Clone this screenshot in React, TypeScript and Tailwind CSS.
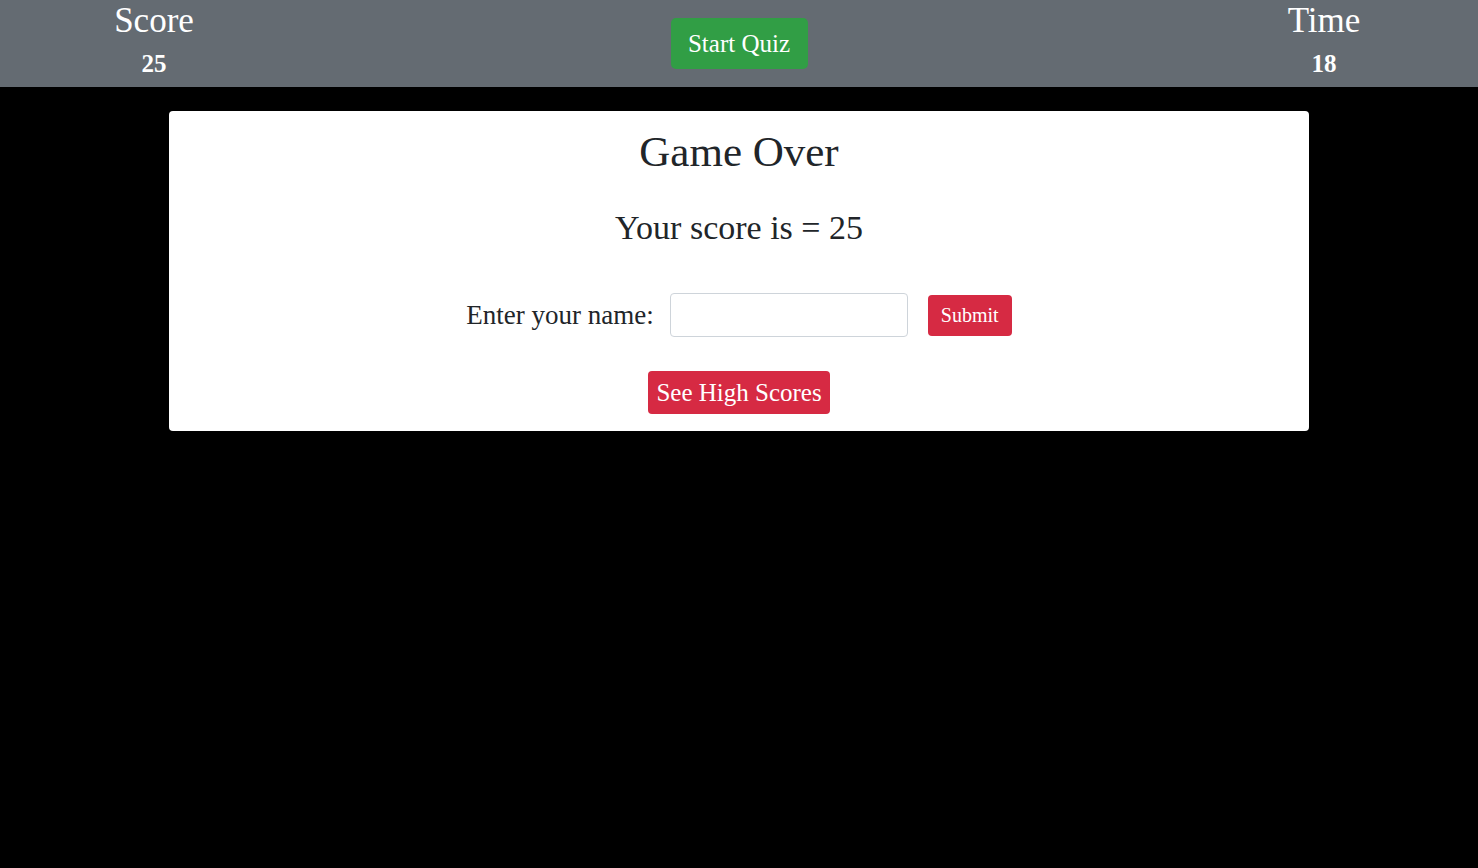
export default function App() {
  return (
    <div className="min-h-[868px] bg-black font-['Liberation_Serif',serif]">
      <header className="flex h-[87px] items-stretch bg-[#646b72] text-white">
        <div className="flex w-[308px] flex-col items-center">
          <p className="mt-[1px] text-[35px] leading-[40px]">Score</p>
          <p className="mt-[9px] text-[25px] font-bold leading-[28px]">25</p>
        </div>
        <div className="flex flex-1 items-start justify-center pt-[18px]">
          <button className="h-[51px] w-[137px] rounded-[5px] bg-[#319e45] text-[25px] text-white">
            Start Quiz
          </button>
        </div>
        <div className="flex w-[308px] flex-col items-center">
          <p className="mt-[1px] text-[35px] leading-[40px]">Time</p>
          <p className="mt-[9px] text-[25px] font-bold leading-[28px]">18</p>
        </div>
      </header>

      <main className="mx-auto mt-[24px] flex w-[1140px] flex-col items-center rounded-[4px] bg-white pb-[17px] pt-[16px] text-[#212529]">
        <h1 className="text-[43px] leading-[50px]">Game Over</h1>
        <p className="mt-[32px] text-[34px] leading-[38px]">Your score is = 25</p>

        <div className="mt-[46px] flex items-center">
          <label className="text-[27px] leading-[30px]">Enter your name:</label>
          <input
            type="text"
            className="ml-[16px] h-[44px] w-[238px] rounded-[4px] border border-[#ced4da] px-3 text-[20px]"
          />
          <button className="ml-[20px] h-[41px] w-[84px] rounded-[4px] bg-[#d62a43] text-[20px] text-white">
            Submit
          </button>
        </div>

        <button className="mt-[34px] h-[43px] w-[182px] rounded-[4px] bg-[#d62a43] text-[25px] text-white">
          See High Scores
        </button>
      </main>
    </div>
  );
}
